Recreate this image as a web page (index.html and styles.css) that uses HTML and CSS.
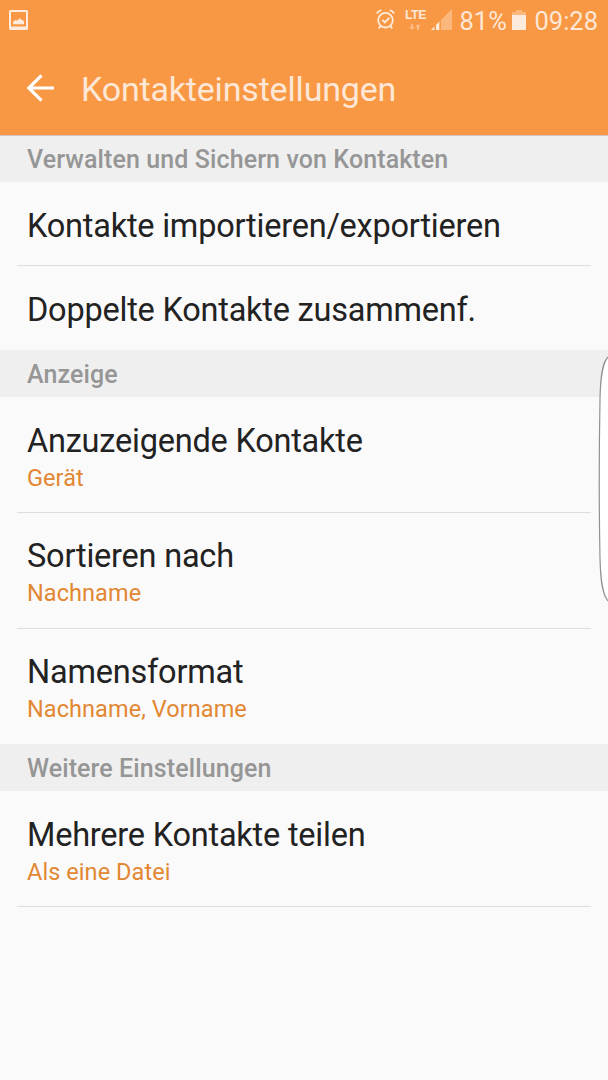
FILE: index.html
```html
<!DOCTYPE html>
<html lang="de">
<head>
<meta charset="utf-8">
<title>Kontakteinstellungen</title>
<link rel="stylesheet" href="styles.css">
</head>
<body>
<div class="screen">
  <header class="header">
    <div class="status">
      <svg class="icon-picture" width="19" height="20" viewBox="0 0 19 20">
        <path fill-rule="evenodd" d="M1.500 0h16A1.500 1.500 0 0 1 19 1.500v17a1.500 1.500 0 0 1-1.500 1.500h-16A1.500 1.500 0 0 1 0 18.500v-17A1.500 1.500 0 0 1 1.500 0zM2 2v14.500h15V2z"/>
        <path d="M4 14.300v-2.300l2.500-2.300 1.500 1 3-2.700 1.700 2.200 1.200-.5 1.100 2v2.600z"/>
      </svg>
      <div class="status-right">
        <svg class="icon-alarm" width="20" height="21" viewBox="0 0 20 21">
          <circle cx="9.500" cy="11.200" r="7.300"/>
          <path d="M6.300 10.800l2.500 2.600 4.600-4.700M.8 4.500Q2.300 2 5.300 1M18.200 4.500Q16.700 2 13.700 1M4.600 17l-1.800 2.500M14.400 17l1.800 2.500"/>
        </svg>
        <div class="network">
          <span class="lte">LTE</span>
          <svg class="arrows" width="12" height="6" viewBox="0 0 12 6">
            <path d="M2 0h2v3h2L3 6 0 3h2zM8 6h2V3h2L9 0 6 3h2z"/>
          </svg>
        </div>
        <svg class="icon-signal" width="21" height="21" viewBox="0 0 21 21">
          <path class="dim" d="M0 21L21 0v21z"/>
          <path d="M0 21l3.500-3.500V21zM5 21v-5L8.500 12.500V21z"/>
          <path class="gap" d="M3.500 21v-5h1.500v5zM8.500 21v-9.500h1.500V21z"/>
        </svg>
        <span class="percent">81%</span>
        <svg class="icon-battery" width="14" height="20" viewBox="0 0 14 20">
          <path class="dim" d="M4 0h6v2h4v3H0V2h4z"/>
          <path d="M0 5h14v15H0z"/>
        </svg>
        <span class="time">09:28</span>
      </div>
    </div>
    <div class="toolbar">
      <svg class="icon-back" width="28" height="28" viewBox="0 0 28 28"><path d="M27 14H2M14.500 1.300L1.800 14l12.700 12.700"/></svg>
      <h1 class="title">Kontakteinstellungen</h1>
    </div>
  </header>
  <main>
    <h2 class="section">Verwalten und Sichern von Kontakten</h2>
    <div class="row single"><span class="label">Kontakte importieren/exportieren</span></div>
    <div class="row single last"><span class="label">Doppelte Kontakte zusammenf.</span></div>
    <h2 class="section">Anzeige</h2>
    <div class="row"><span class="label">Anzuzeigende Kontakte</span><span class="value">Gerät</span></div>
    <div class="row"><span class="label">Sortieren nach</span><span class="value">Nachname</span></div>
    <div class="row last"><span class="label">Namensformat</span><span class="value">Nachname, Vorname</span></div>
    <h2 class="section">Weitere Einstellungen</h2>
    <div class="row"><span class="label">Mehrere Kontakte teilen</span><span class="value">Als eine Datei</span></div>
  </main>
  <svg class="edge-handle" width="10" height="250" viewBox="0 0 10 250">
    <path d="M10 3C4 9 2.500 24 2 45C1.200 90 1.200 165 2 204C2.500 225 4 240 10 247"/>
  </svg>
</div>
</body>
</html>
```
FILE: styles.css
```css
body { margin: 0; background: #fafafa; font-family: Roboto, "Liberation Sans", sans-serif; }
.screen { position: relative; height: 1080px; overflow: hidden; background: #fafafa; }
.header { box-sizing: border-box; height: 136px; background: #f99844; color: #fde7d6; border-bottom: 1px solid #cfc5bc; }
.status { display: flex; justify-content: space-between; align-items: flex-start; height: 42px; padding: 0 10px 0 9px; }
.status svg { display: block; fill: #fdebdd; }
.icon-picture { margin-top: 10px; }
.status-right { display: flex; align-items: flex-start; }
.status .icon-alarm { margin-top: 9px; fill: none; stroke: #fdebdd; stroke-width: 1.8; }
.network { display: flex; flex-direction: column; align-items: center; width: 24px; margin: 9px 4px 0 7px; }
.lte { font-family: "Liberation Sans", Roboto, sans-serif; font-size: 12.5px; font-weight: 700; line-height: 13px; letter-spacing: -0.5px; }
.status .arrows { margin-top: 2px; fill: #fbbc85; }
.icon-signal { margin-top: 9px; }
.status .dim { fill: #fbb77c; }
.status .gap { fill: #f99844; }
.percent, .time { font-size: 25.5px; line-height: 30px; margin-top: 6px; font-weight: 400; }
.percent { width: 48px; margin-left: 7px; white-space: nowrap; }
.icon-battery { margin: 10px 8px 0 5px; }
.toolbar { display: flex; align-items: center; height: 93px; padding-left: 27px; }
.icon-back { margin-top: -2px; fill: none; stroke: #fff; stroke-width: 3.2; }
.title { margin: 0 0 0 26px; font-size: 34px; font-weight: 400; line-height: 40px; letter-spacing: -0.18px; }
.section { margin: 0; box-sizing: border-box; height: 47px; padding-left: 27px; background: #efefef; color: #969696; font-size: 25px; font-weight: 500; line-height: 49px; letter-spacing: 0.1px; }
.section:first-child { height: 46px; line-height: 47px; }
.row { box-sizing: border-box; height: 116px; margin: 0 17px; padding: 24px 10px 0; border-bottom: 1px solid #dedede; display: flex; flex-direction: column; align-items: flex-start; }
.section + .row { padding-top: 25px; }
.row.last { height: 115px; border-bottom-color: transparent; }
.section + .row.single, .row.single { height: 84px; padding-top: 25px; }
.label { color: #222; font-size: 32.500px; line-height: 38px; letter-spacing: -0.22px; white-space: nowrap; }
.value { color: #e28732; font-size: 23.500px; line-height: 28px; margin-top: 4px; letter-spacing: 0.07px; }
.edge-handle { position: absolute; right: 0; top: 354px; fill: #fff; stroke: #919191; stroke-width: 1.2; }
```
